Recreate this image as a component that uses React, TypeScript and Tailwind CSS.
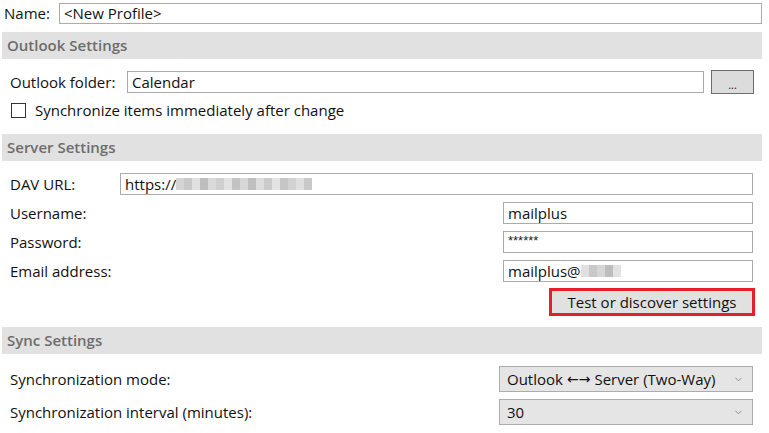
import { ChevronDown } from "lucide-react";

const font = { fontFamily: '"Open Sans", "Noto Sans", sans-serif' };

function Band({ title }: { title: string }) {
  return (
    <div className="h-[27px] bg-[#e1e1e1] flex items-center pl-[5px]">
      <span className="text-[15px] font-semibold text-[#6d6d6d]">{title}</span>
    </div>
  );
}

function TextBox({ className, children }: { className?: string; children?: React.ReactNode }) {
  return (
    <div className={`border border-[#ababab] bg-white flex items-center pl-[4px] text-[15px] text-[#111] ${className ?? ""}`}>
      {children}
    </div>
  );
}

function Blur({ shades }: { shades: string[] }) {
  return (
    <span className="flex h-[12px] items-stretch">
      {shades.map((c, i) => (
        <span key={i} className="w-[8px]" style={{ backgroundColor: c }} />
      ))}
    </span>
  );
}

function Dropdown({ children }: { children: React.ReactNode }) {
  return (
    <div className="w-[254px] h-[26px] border border-[#acacac] bg-[#e5e5e5] flex items-center justify-between pl-[7px] pr-[8px] text-[15px] text-[#111]">
      <span className="flex items-center">{children}</span>
      <ChevronDown size={11} strokeWidth={1.6} className="text-[#707070]" />
    </div>
  );
}

export default function App() {
  return (
    <div className="w-[769px] h-[433px] bg-white overflow-hidden pl-[2px] pr-[7px] pt-[3px]" style={font}>
      {/* Name */}
      <div className="flex items-center h-[21px]">
        <span className="w-[57px] pl-[2px] text-[15px] text-[#111]">Name:</span>
        <TextBox className="flex-1 h-[21px]">&lt;New Profile&gt;</TextBox>
      </div>

      <div className="mt-[8px]">
        <Band title="Outlook Settings" />
      </div>

      {/* Outlook folder */}
      <div className="flex items-center mt-[11px] pl-[8px] pr-[8px] h-[24px]">
        <span className="w-[117px] text-[15px] text-[#111]">Outlook folder:</span>
        <TextBox className="flex-1 h-[22px]">Calendar</TextBox>
        <div className="ml-[7px] w-[43px] h-[24px] border border-[#6d6d6d] bg-[#dcdcdc] flex items-end justify-center pb-[3px] text-[11px] leading-none text-[#222]">
          ...
        </div>
      </div>

      {/* Checkbox */}
      <div className="flex items-center mt-[8px] pl-[9px] h-[16px]">
        <span className="w-[15px] h-[15px] border border-[#333] bg-white" />
        <span className="ml-[9px] text-[15px] text-[#111]">Synchronize items immediately after change</span>
      </div>

      <div className="mt-[16px]">
        <Band title="Server Settings" />
      </div>

      {/* Server fields */}
      <div className="pl-[8px] pr-[9px]">
        <div className="flex items-center mt-[12px] h-[22px]">
          <span className="w-[110px] text-[15px] text-[#111]">DAV URL:</span>
          <TextBox className="flex-1 h-[22px]">
            <span>https://</span>
            <Blur shades={["#d4d4d4", "#c8c8c8", "#e0e0e0", "#bdbdbd", "#d9d9d9", "#cfcfcf", "#e2e2e2", "#c4c4c4", "#d7d7d7", "#bfbfbf", "#dcdcdc", "#cbcbcb", "#e3e3e3", "#c6c6c6", "#d2d2d2", "#dedede", "#c9c9c9"]} />
          </TextBox>
        </div>
        <div className="flex items-center mt-[7px] h-[22px]">
          <span className="flex-1 text-[15px] text-[#111]">Username:</span>
          <TextBox className="w-[250px] h-[22px]">mailplus</TextBox>
        </div>
        <div className="flex items-center mt-[7px] h-[22px]">
          <span className="flex-1 text-[15px] text-[#111]">Password:</span>
          <TextBox className="w-[250px] h-[22px]">
            <span className="text-[13px] text-[#222] -mt-[2px]" style={{ fontFamily: '"Liberation Sans", sans-serif' }}>******</span>
          </TextBox>
        </div>
        <div className="flex items-center mt-[7px] h-[22px]">
          <span className="flex-1 text-[15px] text-[#111]">Email address:</span>
          <TextBox className="w-[250px] h-[22px]">
            <span>mailplus@</span>
            <Blur shades={["#e0e0e0", "#c8c8c8", "#d6d6d6", "#bdbdbd", "#e2e2e2"]} />
          </TextBox>
        </div>
        <div className="flex justify-end mt-[6px] -mr-[2px]">
          <div className="w-[206px] h-[28px] border-[3px] border-[#e5202a] bg-[#e1e1e1] flex items-center justify-center text-[15px] text-[#111]">
            Test or discover settings
          </div>
        </div>
      </div>

      <div className="mt-[11px]">
        <Band title="Sync Settings" />
      </div>

      {/* Sync fields */}
      <div className="pl-[8px] pr-[9px]">
        <div className="flex items-center mt-[12px]">
          <span className="flex-1 text-[15px] text-[#111]">Synchronization mode:</span>
          <Dropdown>
            Outlook
            <span className="mx-[4px] text-[14px]" style={{ fontFamily: '"DejaVu Sans", sans-serif' }}>←→</span>
            Server (Two-Way)
          </Dropdown>
        </div>
        <div className="flex items-center mt-[7px]">
          <span className="flex-1 text-[15px] text-[#111]">Synchronization interval (minutes):</span>
          <Dropdown>30</Dropdown>
        </div>
      </div>
    </div>
  );
}
